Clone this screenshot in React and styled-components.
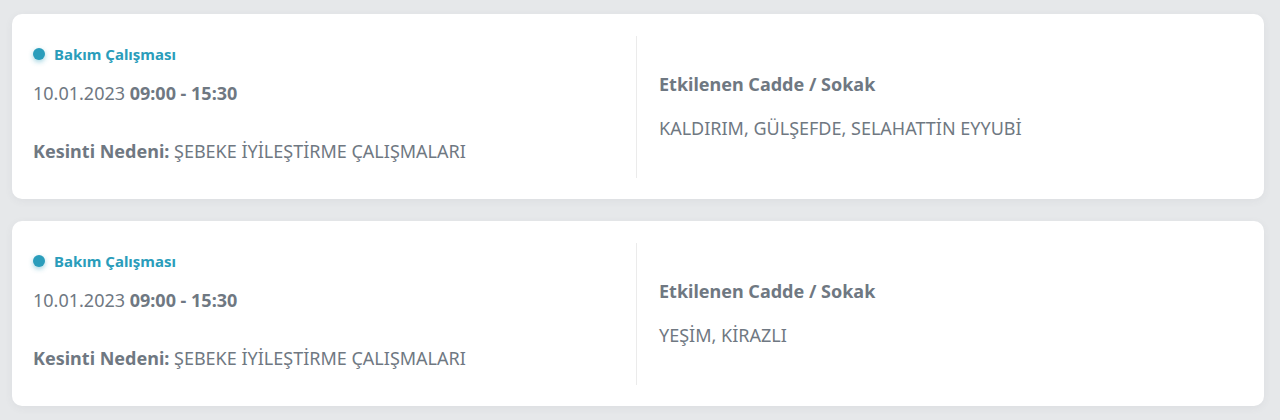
import React from 'react';
import styled, { createGlobalStyle } from 'styled-components';

const GlobalStyle = createGlobalStyle`
  body {
    margin: 0;
    background: #e6e8ea;
    font-family: "Noto Sans", "Open Sans", sans-serif;
  }
`;

const List = styled.div`
  display: flex;
  flex-direction: column;
  gap: 22px;
  padding: 14px 16px 14px 12px;
`;

const Card = styled.div`
  display: grid;
  grid-template-columns: 625px 1fr;
  background: #fff;
  border-radius: 10px;
  padding: 22px 0 21px;
  box-shadow: 0 2px 8px rgba(60, 70, 80, 0.06);
`;

const Left = styled.div`
  display: flex;
  flex-direction: column;
  padding: 9px 0 0 21px;
  border-right: 1px solid #ebebeb;
  height: 133px;
`;

const Right = styled.div`
  display: flex;
  flex-direction: column;
  justify-content: center;
  gap: 20px;
  padding: 0 0 2px 22px;
`;

const Status = styled.div`
  display: flex;
  align-items: center;
  gap: 9px;
  color: #2a9dbb;
  font-size: 15px;
  font-weight: 700;
  line-height: 18px;
`;

const Dot = styled.span`
  width: 12px;
  height: 12px;
  border-radius: 50%;
  background: #2a9dbb;
  box-shadow: 0 2px 5px rgba(42, 157, 187, 0.45);
`;

const Line = styled.div`
  color: #6f7882;
  font-size: 18px;
  line-height: 24px;
  margin-top: ${p => p.$mt || 0}px;
  b {
    font-weight: 700;
  }
`;

const Title = styled.div`
  color: #6f7882;
  font-size: 18px;
  font-weight: 700;
  line-height: 24px;
`;

const items = [
  { streets: 'KALDIRIM, GÜLŞEFDE, SELAHATTİN EYYUBİ' },
  { streets: 'YEŞİM, KİRAZLI' },
];

export default function App() {
  return (
    <>
      <GlobalStyle />
      <List>
        {items.map((item, i) => (
          <Card key={i}>
            <Left>
              <Status>
                <Dot />
                Bakım Çalışması
              </Status>
              <Line $mt={18}>
                10.01.2023 <b>09:00 - 15:30</b>
              </Line>
              <Line $mt={34}>
                <b>Kesinti Nedeni:</b> ŞEBEKE İYİLEŞTİRME ÇALIŞMALARI
              </Line>
            </Left>
            <Right>
              <Title>Etkilenen Cadde / Sokak</Title>
              <Line>{item.streets}</Line>
            </Right>
          </Card>
        ))}
      </List>
    </>
  );
}
